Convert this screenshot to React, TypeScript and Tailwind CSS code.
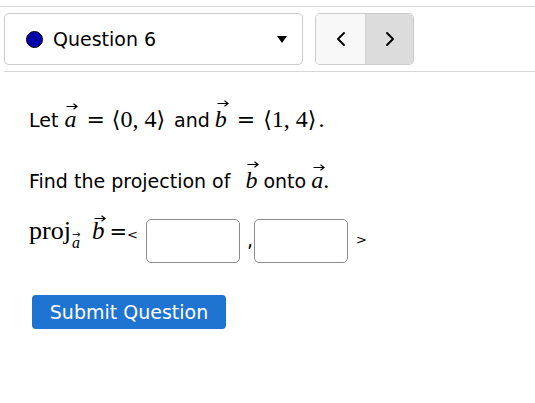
import { ChevronLeft, ChevronRight } from 'lucide-react';

const sans = "font-['DejaVu_Sans',sans-serif]";
const serif = "font-['Liberation_Serif',serif]";
const wide = "font-['DejaVu_Serif','DejaVu_Sans',serif]";

// italic letter with a small vector arrow drawn over it
function Vec({ letter, arrowTop, small = false }: { letter: string; arrowTop: string; small?: boolean }) {
  return (
    <span className="relative inline-block leading-none">
      <span className="italic">{letter}</span>
      <svg
        className={`absolute ${small ? 'left-[0px]' : 'left-[2px]'} ${arrowTop}`}
        width={small ? 9 : 12}
        height={small ? 5 : 7}
        viewBox="0 0 12 7"
      >
        <path d="M0.5 3.5 H10.5 M7.5 0.8 L11 3.5 L7.5 6.2" stroke="#000" strokeWidth="1.2" fill="none" />
      </svg>
    </span>
  );
}

export default function App() {
  return (
    <div className={`w-[535px] h-[403px] bg-white text-black ${sans}`}>
      {/* Question navigation */}
      <div className="pt-[6px]">
        <div className="h-px bg-[#d6d6d6]" />
        <div className="flex items-center gap-[12px] pl-[4px] pt-[6px] pb-[6px]">
          <div className="w-[299px] h-[52px] border border-[#cccccc] rounded-[5px] flex items-center pl-[21px] pr-[15px]">
            <span className="w-[17px] h-[17px] rounded-full bg-[#0000a8] border border-black" />
            <span className="ml-[10px] text-[19px]">Question 6</span>
            <svg className="ml-auto" width="10" height="7" viewBox="0 0 10 7">
              <path d="M0 0 H10 L5 7 Z" fill="#000" />
            </svg>
          </div>
          <div className="w-[99px] h-[52px] border border-[#cccccc] rounded-[5px] flex overflow-hidden">
            <button className="w-[50px] h-full bg-[#f8f8f8] border-r border-[#d4d4d4] flex items-center justify-center">
              <ChevronLeft size={24} strokeWidth={1.9} />
            </button>
            <button className="flex-1 h-full bg-[#dcdcdc] flex items-center justify-center">
              <ChevronRight size={24} strokeWidth={1.9} />
            </button>
          </div>
        </div>
        <div className="ml-[4px] h-px bg-[#d6d6d6]" />
      </div>

      {/* Question body */}
      <div className="pl-[29px] pt-[32px]">
        <div className="flex items-baseline h-[30px] leading-[30px] text-[19px]">
          <span>Let</span>
          <span className={`${serif} text-[24px] ml-[6px] flex items-baseline`}>
            <Vec letter="a" arrowTop="top-[-4px]" />
            <span className={`${sans} text-[22px] ml-[10px]`}>=</span>
            <span className={`${wide} text-[22px] ml-[7px]`}>⟨</span>
            <span>0,</span>
            <span className="ml-[6px]">4</span>
            <span className={`${wide} text-[22px]`}>⟩</span>
          </span>
          <span className="ml-[9px]">and</span>
          <span className={`${serif} text-[24px] ml-[5px] flex items-baseline`}>
            <Vec letter="b" arrowTop="top-[-7px]" />
            <span className={`${sans} text-[22px] ml-[10px]`}>=</span>
            <span className={`${wide} text-[22px] ml-[8px]`}>⟨</span>
            <span>1,</span>
            <span className="ml-[6px]">4</span>
            <span className={`${wide} text-[22px]`}>⟩</span>
            <span className="ml-[2px]">.</span>
          </span>
        </div>

        <div className="flex items-baseline h-[30px] leading-[30px] text-[19px] mt-[31px]">
          <span>Find the projection of</span>
          <span className={`${serif} text-[24px] ml-[15px]`}>
            <Vec letter="b" arrowTop="top-[-7px]" />
          </span>
          <span className="ml-[6px]">onto</span>
          <span className={`${serif} text-[24px] ml-[5px] flex items-baseline`}>
            <Vec letter="a" arrowTop="top-[-4px]" />
            <span>.</span>
          </span>
        </div>

        <div className="flex items-start h-[44px] mt-[24px]">
          <span className={`${serif} text-[26px] leading-none flex items-baseline -mt-[1px]`}>
            <span>proj</span>
            <span className="text-[16px] translate-y-[9px] ml-[1px]">
              <Vec letter="a" arrowTop="top-[-3px]" small />
            </span>
            <span className="text-[25px] ml-[12px]">
              <Vec letter="b" arrowTop="top-[-3px]" />
            </span>
            <span className={`${sans} text-[21px] ml-[5px]`}>=</span>
            <span className={`${sans} text-[13px]`}>&lt;</span>
          </span>
          <input className="ml-[8px] w-[94px] h-[44px] border border-[#8c8c8c] rounded-[5px] outline-none" />
          <span className="ml-[7px] mr-[1px] text-[19px] leading-none mt-[12px]">,</span>
          <input className="w-[94px] h-[44px] border border-[#8c8c8c] rounded-[5px] outline-none" />
          <span className="ml-[8px] text-[13px] leading-none mt-[14px]">&gt;</span>
        </div>

        <button className="mt-[32px] ml-[3px] w-[194px] h-[34px] rounded-[4px] bg-[#1f74d2] text-white text-[19px] flex items-center justify-center">
          Submit Question
        </button>
      </div>
    </div>
  );
}
